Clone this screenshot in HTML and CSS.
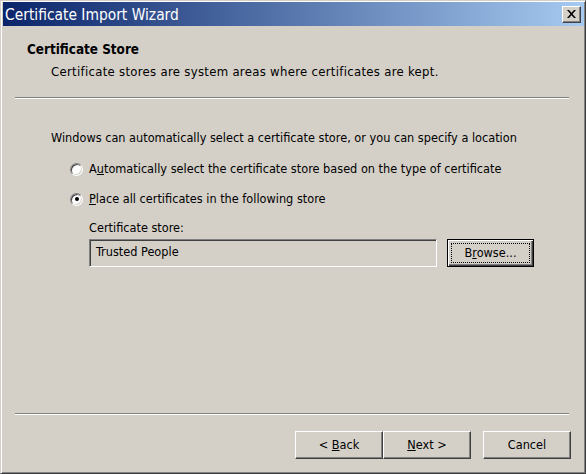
FILE: index.html
```html
<!DOCTYPE html>
<html>
<head>
<meta charset="utf-8">
<link rel="stylesheet" href="styles.css">
</head>
<body>
<div class="window">
  <div class="titlebar">
    <span class="title">Certificate Import Wizard</span>
    <div class="close">
      <svg width="9" height="8" viewBox="0 0 9 8"><path d="M0 0h2l2.5 2.8L7 0h2L5.5 4 9 8H7L4.5 5.2 2 8H0l3.5-4z" fill="#000"/></svg>
    </div>
  </div>
  <div class="header">
    <div class="h-title">Certificate Store</div>
    <div class="h-sub">Certificate stores are system areas where certificates are kept.</div>
  </div>
  <div class="sep top"></div>
  <div class="content">
    <div class="intro">Windows can automatically select a certificate store, or you can specify a location</div>
    <div class="radio r1"><span class="circle"></span><span>A<u>u</u>tomatically select the certificate store based on the type of certificate</span></div>
    <div class="radio r2"><span class="circle checked"></span><span><u>P</u>lace all certificates in the following store</span></div>
    <div class="store">
      <div class="store-label">Certificate store:</div>
      <div class="store-row">
        <div class="field">Trusted People</div>
        <div class="btn default"><span class="focus"><span>B<u>r</u>owse...</span></span></div>
      </div>
    </div>
  </div>
  <div class="sep bottom"></div>
  <div class="footer">
    <div class="btn"><span>&lt; <u>B</u>ack</span></div>
    <div class="btn"><span><u>N</u>ext &gt;</span></div>
    <div class="btn cancel"><span>Cancel</span></div>
  </div>
</div>
</body>
</html>
```
FILE: styles.css
```css
html, body {
  margin: 0;
  padding: 0;
  background: #d4d0c8;
}
.window {
  width: 586px;
  height: 474px;
  box-sizing: border-box;
  border: 1px solid;
  border-color: #d4d0c8 #404040 #404040 #d4d0c8;
  box-shadow: inset 1px 1px #fff, inset -1px -1px #808080;
  padding: 1px 1px 0 2px;
  display: flex;
  flex-direction: column;
  background: #d4d0c8;
  font-family: "DejaVu Sans Condensed", "DejaVu Sans", sans-serif;
  font-stretch: condensed;
  font-size: 12.6px;
  line-height: 14px;
  color: #000;
}
.titlebar {
  height: 24px;
  display: flex;
  align-items: center;
  padding: 0 3px 0 2px;
  background: linear-gradient(to right, #0a246a, #a6caf0);
}
.title {
  color: #fff;
  font-size: 15.4px;
  line-height: 18px;
  padding-top: 1px;
}
.close {
  margin-left: auto;
  width: 19px;
  height: 17px;
  box-sizing: border-box;
  background: #d4d0c8;
  border: 1px solid;
  border-color: #fff #404040 #404040 #fff;
  box-shadow: inset -1px -1px #808080;
  display: flex;
  align-items: center;
  justify-content: center;
  padding-bottom: 1px;
}
.header {
  padding: 17px 0 0 24px;
}
.h-title {
  font-weight: bold;
  font-size: 13.4px;
}
.h-sub {
  margin-top: 8px;
  padding-left: 24px;
  font-size: 13px;
  letter-spacing: 0.3px;
}
.sep {
  height: 2px;
  box-sizing: border-box;
  border-top: 1px solid #808080;
  border-bottom: 1px solid #fff;
  margin: 0 15px 0 12px;
}
.sep.top {
  margin-top: 18px;
}
.sep.bottom {
  margin-top: auto;
}
.content {
  padding: 32px 0 0 48px;
}
.radio {
  display: flex;
  align-items: center;
  gap: 6px;
  margin-left: 19px;
}
.r1 { margin-top: 17px; }
.r2 { margin-top: 16px; }
.circle {
  width: 13px;
  height: 13px;
  box-sizing: border-box;
  border-radius: 50%;
  border: 1px solid;
  border-color: #808080 #fff #fff #808080;
  box-shadow: inset 1px 1px #404040, inset -1px -1px #d4d0c8;
  background: #fff;
  position: relative;
}
.circle.checked::after {
  content: "";
  position: absolute;
  left: 3.5px;
  top: 3.5px;
  width: 4px;
  height: 4px;
  border-radius: 50%;
  background: #000;
}
.store {
  margin-left: 38px;
  margin-top: 15px;
}
.store-row {
  display: flex;
  gap: 10px;
  margin-top: 4px;
}
.field {
  width: 348px;
  height: 28px;
  box-sizing: border-box;
  border: 1px solid;
  border-color: #808080 #fff #fff #808080;
  box-shadow: inset 1px 1px #404040, inset -1px -1px #d4d0c8;
  padding: 5px 0 0 6px;
}
.btn {
  width: 88px;
  height: 28px;
  box-sizing: border-box;
  border: 1px solid;
  border-color: #fff #404040 #404040 #fff;
  box-shadow: inset -1px -1px #808080, inset 1px 1px #d4d0c8;
  display: flex;
  align-items: center;
  justify-content: center;
  background: #d4d0c8;
}
.btn.default {
  width: 87px;
  border: 1px solid #000;
  box-shadow: inset 1px 1px #fff, inset -1px -1px #404040, inset -2px -2px #808080;
  padding: 3px;
}
.focus {
  flex: 1;
  align-self: stretch;
  border: 1px dotted #000;
  display: flex;
  align-items: center;
  justify-content: center;
}
.footer {
  display: flex;
  justify-content: flex-end;
  padding: 16px 13px 14px 0;
}
.cancel {
  margin-left: 12px;
}
```
